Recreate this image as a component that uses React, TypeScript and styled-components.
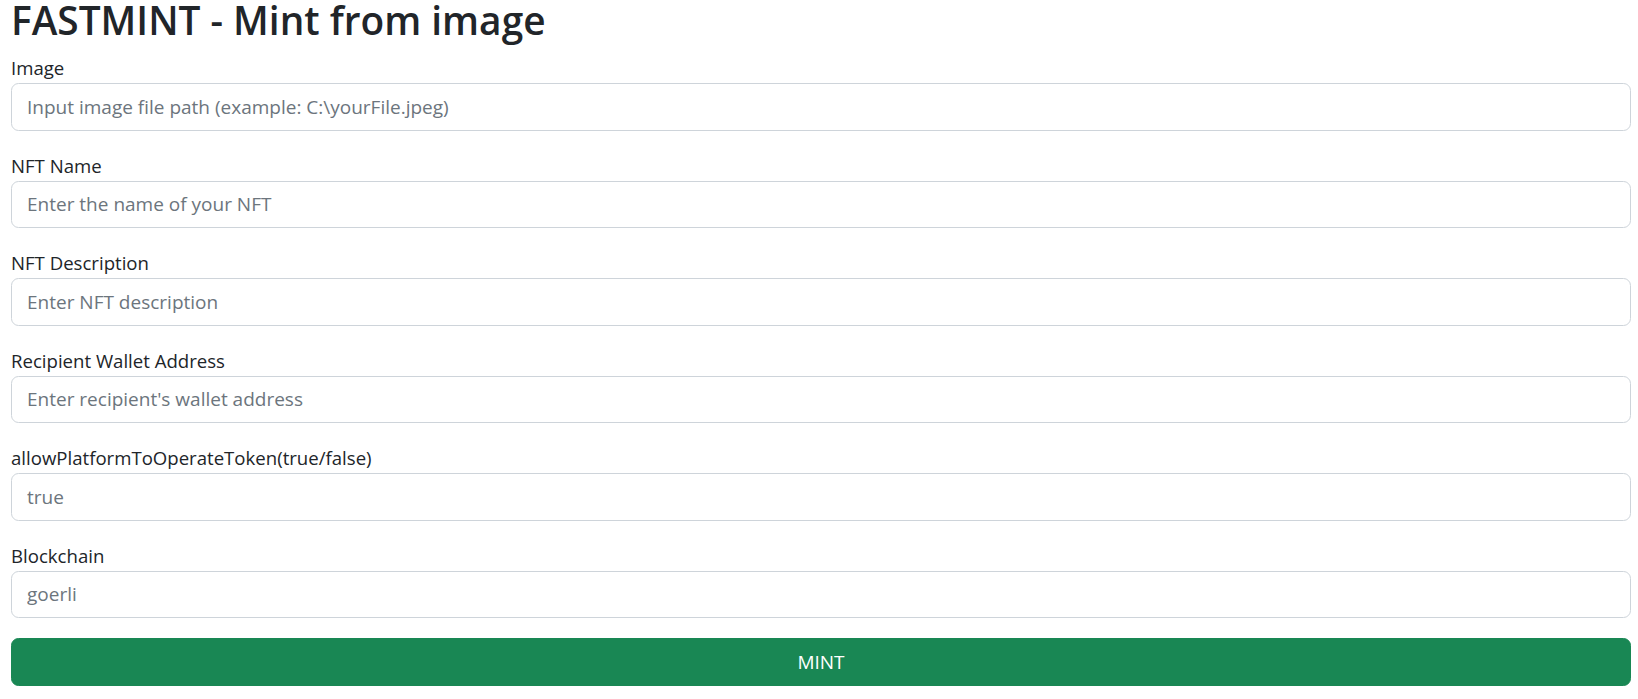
import React from "react";
import styled, { createGlobalStyle } from "styled-components";

const GlobalStyle = createGlobalStyle`
  html, body {
    margin: 0;
    padding: 0;
    background: #fff;
  }
  body {
    font-family: "Open Sans", "Noto Sans", "Liberation Sans", sans-serif;
    color: #212529;
  }
  * {
    box-sizing: border-box;
  }
`;

const Page = styled.main`
  padding: 0 7px 0 11px;
`;

const Title = styled.h1`
  margin: 0 0 13px;
  font-size: 38.8px;
  font-weight: 600;
  line-height: 40px;
  color: #212529;
`;

const Field = styled.div`
  display: flex;
  flex-direction: column;
  margin-bottom: 20px;
`;

const Label = styled.label`
  font-size: 18.6px;
  line-height: 30px;
  color: #212529;
`;

const Input = styled.input`
  display: block;
  width: 100%;
  height: 47.5px;
  padding: 7.5px 15px;
  font: inherit;
  font-size: 19px;
  line-height: 30px;
  color: #212529;
  background: #fff;
  border: 1.25px solid #ced4da;
  border-radius: 7.5px;
  outline: none;

  &::placeholder {
    color: #6c757d;
    opacity: 1;
  }
`;

const MintButton = styled.button`
  display: block;
  width: 100%;
  height: 47.5px;
  padding: 7.5px 15px;
  font: inherit;
  font-size: 19px;
  line-height: 30px;
  color: #fff;
  background: #198754;
  border: 1.25px solid #198754;
  border-radius: 7.5px;
  cursor: pointer;
`;

const fields = [
  { label: "Image", placeholder: "Input image file path (example: C:\\yourFile.jpeg)" },
  { label: "NFT Name", placeholder: "Enter the name of your NFT" },
  { label: "NFT Description", placeholder: "Enter NFT description" },
  { label: "Recipient Wallet Address", placeholder: "Enter recipient's wallet address" },
  { label: "allowPlatformToOperateToken(true/false)", placeholder: "true" },
  { label: "Blockchain", placeholder: "goerli" },
];

const App: React.FC = () => {
  return (
    <>
      <GlobalStyle />
      <Page>
        <Title>FASTMINT - Mint from image</Title>
        {fields.map((f, i) => (
          <Field key={f.label}>
            <Label htmlFor={`field-${i}`}>{f.label}</Label>
            <Input id={`field-${i}`} type="text" placeholder={f.placeholder} />
          </Field>
        ))}
        <MintButton type="button">MINT</MintButton>
      </Page>
    </>
  );
};

export default App;
